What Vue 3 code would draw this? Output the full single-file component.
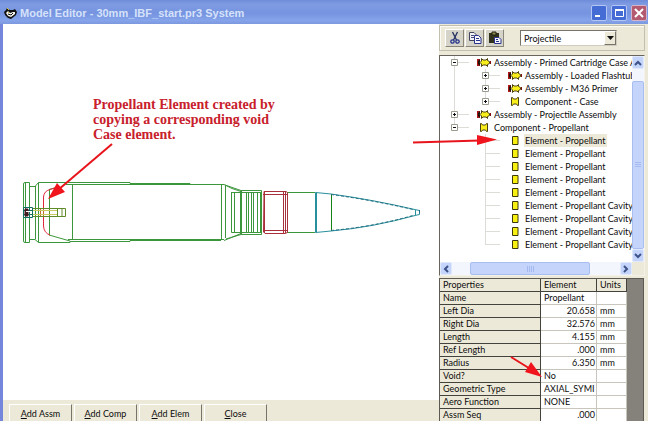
<script setup>
import { ref } from 'vue'

const kind = ref('Projectile')
const selected = ref(6)

const tree = [
  { level: 1, type: 'assembly', toggle: '-', label: 'Assembly - Primed Cartridge Case A' },
  { level: 2, type: 'assembly', toggle: '+', trunk: true, label: 'Assembly - Loaded Flashtub' },
  { level: 2, type: 'assembly', toggle: '+', trunk: true, label: 'Assembly - M36 Primer' },
  { level: 2, type: 'component', toggle: '+', trunk: true, last: true, label: 'Component - Case' },
  { level: 1, type: 'assembly', toggle: '+', label: 'Assembly - Projectile Assembly' },
  { level: 1, type: 'component', toggle: '-', last: true, label: 'Component - Propellant' },
  { level: 2, type: 'element', label: 'Element - Propellant' },
  { level: 2, type: 'element', label: 'Element - Propellant' },
  { level: 2, type: 'element', label: 'Element - Propellant' },
  { level: 2, type: 'element', label: 'Element - Propellant' },
  { level: 2, type: 'element', label: 'Element - Propellant' },
  { level: 2, type: 'element', label: 'Element - Propellant Cavity' },
  { level: 2, type: 'element', label: 'Element - Propellant Cavity' },
  { level: 2, type: 'element', label: 'Element - Propellant Cavity' },
  { level: 2, type: 'element', last: true, label: 'Element - Propellant Cavity' },
]

const properties = [
  { name: 'Name', value: 'Propellant', unit: '' },
  { name: 'Left Dia', value: '20.658', unit: 'mm', num: true },
  { name: 'Right Dia', value: '32.576', unit: 'mm', num: true },
  { name: 'Length', value: '4.155', unit: 'mm', num: true },
  { name: 'Ref Length', value: '.000', unit: 'mm', num: true },
  { name: 'Radius', value: '6.350', unit: 'mm', num: true },
  { name: 'Void?', value: 'No', unit: '' },
  { name: 'Geometric Type', value: 'AXIAL_SYMI', unit: '' },
  { name: 'Aero Function', value: 'NONE', unit: '' },
  { name: 'Assm Seq', value: '.000', unit: '', num: true },
]

const actions = [
  { key: 'A', rest: 'dd Assm' },
  { key: 'A', rest: 'dd Comp' },
  { key: 'A', rest: 'dd Elem' },
  { key: 'C', rest: 'lose' },
]
</script>

<template>
  <div class="window">
    <header class="titlebar">
      <svg class="app-icon" width="13" height="13" viewBox="0 0 13 13">
        <path d="M0 5 L2 3 L3 1 L6 3 L9 3 L11 2 L13 5 L12 8 L7 12 L4 11 L1 8 Z" fill="#111" />
        <path d="M2 6 L4 4 L6 6 L9 5 L11 5 L11 7 L7 10 L4 9 Z" fill="#f4f4ee" />
        <path d="M3 1 L5 3 M4 5 L5 6" stroke="#d8c84a" stroke-width="1" />
        <path d="M4 7 L7 8 L9 6" stroke="#111" stroke-width="1" fill="none" />
      </svg>
      <h1 class="title">Model Editor - 30mm_IBF_start.pr3 System</h1>
      <div class="caption-buttons">
        <button class="caption" aria-label="Minimize">
          <svg width="14" height="14" viewBox="0 0 14 14"><path d="M3 10 H8" stroke="#fff" stroke-width="2" /></svg>
        </button>
        <button class="caption" aria-label="Maximize">
          <svg width="14" height="14" viewBox="0 0 14 14"><path d="M3 4 H12" stroke="#fff" stroke-width="2" /><path d="M3.5 4 V10.5 H11.5 V4" stroke="#fff" fill="none" /></svg>
        </button>
        <button class="caption close" aria-label="Close window">
          <svg width="14" height="14" viewBox="0 0 14 14"><path d="M3 3 L11 11 M11 3 L3 11" stroke="#fff" stroke-width="2" /></svg>
        </button>
      </div>
    </header>

    <div class="body">
      <main class="work">
        <div class="canvas">
          <svg class="drawing" width="430" height="80" viewBox="0 172 430 80" fill="none" stroke="#3c963c" stroke-width="1">
            <path d="M23.5 184 Q23.5 182.500 25 182.500 H29.500 V242.500 H25 Q23.500 242.500 23.500 241 Z M25.500 183 V242" />
            <path d="M29.500 186.500 H35 L38.500 182.500 M29.500 239.500 H35 L38.500 242.500 M35.500 186 V239 M38.500 182.500 V242.500" />
            <path d="M38.500 182.500 H130 V183.500 H190 V184.500 H223 M66 184.500 H224 M38.500 242.500 H70 V241.500 H130 V240.500 H221 M68 239.500 H224" />
            <path d="M72.500 185 V240 M49.500 189 V235 M49 189.500 L58 187 M49 235 L70 241" />
            <path d="M221.500 185 V240 M225.500 186 V238 M224 184.500 L232 188.500 L241 191.500 M224 240.500 L241 233.500 M225 185 L241 190.500 H261.500 V234.500 H241 L226 239" />
            <path d="M231.500 192 V232.500 H261 M234.500 192 V232 M231.500 192.500 H261 M240.500 191 V234 M241.500 191 V234 M246.500 192 V233 M248.500 192 V233 M251.500 192 V233 M253.500 192 V233 M257.500 192 V233 M260.500 192 V233 M287 192.500 H315 M287 232.500 H315" />
            <path d="M331.500 194 V230" stroke="#148214" />
            <path d="M58 187 L50 189.500 Q44 191 43.500 197 V226 Q44 233 50 235" stroke="#e0283c" />
            <path d="M33 208.500 H65.500 V216.500 H33 M49.500 208 V216 M57.500 208 V216 M62 209 V216" stroke="#5f8a28" />
            <path d="M40.500 209 V216 M43.500 209 V216" stroke="#c46a30" />
            <path d="M33 210.500 H57 M33 214.500 H57" stroke="#c8cc60" />
            <path d="M23.500 207.500 H32.500 V217.500 H23.500 Z M29.500 208 V217 M23 210.500 H32 M23 214.500 H32" stroke="#137060" />
            <path d="M25 209 H28 V216 H25 Z" fill="#461820" stroke="#461820" />
            <path d="M26 211.500 H30" stroke="#fff" />
            <path d="M264 191.500 H286 L287.500 192.500 V232.500 L285 233.500 H265 L263.500 232 Z M264.500 192 V233 M283.500 192 V233 M285.500 192 V233 M263 194.500 H287 M263 230.500 H287" stroke="#a8303c" />
            <path d="M315.500 192.500 V232.500 M316.500 192.500 V232.500 M315.500 192.500 L331 194 Q372 199.500 417 210 L419.500 210.500 V214.500 L417 215 Q372 227.500 331 231 L315.500 232.500 M415.500 210 V215" stroke="#28909c" />
            <path d="M331 194.500 Q372 200 413 209.500 M331 230.500 Q372 227 413 215.500 M419.500 210 V215" stroke="#206c80" stroke-dasharray="3 2" />
          </svg>
          <p class="note">Propellant Element created by<br />copying a corresponding void<br />Case element.</p>
        </div>
        <footer class="actions">
          <button v-for="(a, i) in actions" :key="i" class="action"><u>{{ a.key }}</u>{{ a.rest }}</button>
        </footer>
      </main>

      <aside class="side">
        <div class="toolbar">
          <div class="tools">
            <button class="tool" aria-label="Cut">
              <svg width="14" height="14" viewBox="0 0 14 14" fill="none"><path d="M4.500 1 L8.500 9 M9.500 1 L5.500 9" stroke="#222e60" stroke-width="1.300" /><circle cx="4.500" cy="10.500" r="1.700" stroke="#26348c" stroke-width="1.300" /><circle cx="9.500" cy="10.500" r="1.700" stroke="#26348c" stroke-width="1.300" /></svg>
            </button>
            <button class="tool" aria-label="Copy">
              <svg width="14" height="14" viewBox="0 0 14 14"><path d="M1.500 1.500 H6 L8.500 4 V9.500 H1.500 Z" fill="#f2f2f6" stroke="#40445c" /><path d="M3 4.500 H6 M3 6.500 H6" stroke="#444a80" /><path d="M6.500 4.500 H10.500 L13 7 V12.500 H6.500 Z" fill="#f4f4fa" stroke="#29348c" /><path d="M8 7.500 H11 M8 9.500 H12" stroke="#29348c" /></svg>
            </button>
            <button class="tool" aria-label="Paste">
              <svg width="14" height="14" viewBox="0 0 14 14"><path d="M1 2 H11 V12 H1 Z" fill="#30321c" /><path d="M4 1 H8 V4 H4 Z" fill="#8c8a50" stroke="#20200e" /><path d="M6.500 6.500 H11 L13 8.500 V12.500 H6.500 Z" fill="#f4f4fa" stroke="#29348c" /><path d="M8 8.500 H10 M8 10.500 H11" stroke="#29348c" /></svg>
            </button>
          </div>
          <div class="combo">
            <select v-model="kind" aria-label="Model kind">
              <option>Projectile</option>
            </select>
            <span class="combo-arrow"><svg width="7" height="4" viewBox="0 0 7 4"><path d="M0 0 H7 L3.500 4 Z" fill="#111" /></svg></span>
          </div>
        </div>

        <section class="tree" aria-label="Model tree">
          <ul class="rows">
            <li v-for="(n, i) in tree" :key="i" class="row">
              <span v-if="n.level === 2" class="guide" :class="{ trunk: n.trunk }"></span>
              <span class="guide trunk branch" :class="{ last: n.last }">
                <button v-if="n.toggle" class="toggle" :aria-label="n.toggle === '+' ? 'Expand' : 'Collapse'">
                  <svg width="7" height="7" viewBox="0 0 7 7"><path d="M.5 .5 H6.500 V6.500 H.5 Z" fill="#fff" stroke="#9a9a8e" /><path d="M2 3.500 H5" stroke="#111" /><path v-if="n.toggle === '+'" d="M3.500 2 V5" stroke="#111" /></svg>
                </button>
              </span>
              <span class="icon">
                <svg v-if="n.type === 'assembly'" width="14" height="9" viewBox="0 0 14 9">
                  <path d="M0 1 H3 V8 H0 Z" fill="#b01818" /><path d="M1 3 L3 1 V8 L1 6 Z" fill="#201008" />
                  <path d="M4.500 .5 L6 2 H9 L10.500 .5 V2.500 L12.500 3.500 V5.500 L10.500 6.500 V8.500 L9 7 H6 L4.500 8.500 V6 L3 4.500 L4.500 3 Z" fill="#f8ee1c" stroke="#4c4010" />
                  <path d="M5 3 H11 V6 H5 Z" fill="#f8ee1c" />
                  <path d="M13.500 3 V6" stroke="#801010" />
                </svg>
                <svg v-else-if="n.type === 'component'" width="8" height="9" viewBox="0 0 8 9">
                  <path d="M.5 .5 H1.500 L2.500 2 H5.500 L6.500 .5 H7.500 V8.500 H6.500 L5.500 7 H2.500 L1.500 8.500 H.5 Z" fill="#f8ee1c" stroke="#4c4010" />
                </svg>
                <svg v-else width="7" height="9" viewBox="0 0 7 9"><path d="M.5 .5 H6 V8.500 H.5 Z" fill="#f8f010" stroke="#3c380c" /></svg>
              </span>
              <a href="#" class="label" :class="{ selected: selected === i }" @click.prevent="selected = i">{{ n.label }}</a>
            </li>
          </ul>
          <div class="vscroll">
            <button class="sb" aria-label="Scroll up"><svg width="8" height="6" viewBox="0 0 8 6"><path d="M1 5 L4 2 L7 5" fill="none" stroke="#3c5288" stroke-width="2" /></svg></button>
            <span class="vthumb"><svg width="6" height="7" viewBox="0 0 6 7"><path d="M0 .5 H6 M0 2.500 H6 M0 4.500 H6" stroke="#a4baf0" /></svg></span>
            <button class="sb" aria-label="Scroll down"><svg width="8" height="6" viewBox="0 0 8 6"><path d="M1 1 L4 4 L7 1" fill="none" stroke="#3c5288" stroke-width="2" /></svg></button>
          </div>
          <div class="hscroll">
            <button class="sb" aria-label="Scroll left"><svg width="6" height="8" viewBox="0 0 6 8"><path d="M5 1 L2 4 L5 7" fill="none" stroke="#3c5288" stroke-width="2" /></svg></button>
            <span class="hthumb"><svg width="7" height="6" viewBox="0 0 7 6"><path d="M.5 0 V6 M2.500 0 V6 M4.500 0 V6 M6.500 0 V6" stroke="#a4baf0" /></svg></span>
            <button class="sb" aria-label="Scroll right"><svg width="6" height="8" viewBox="0 0 6 8"><path d="M1 1 L4 4 L1 7" fill="none" stroke="#3c5288" stroke-width="2" /></svg></button>
          </div>
        </section>

        <div class="sheet">
          <table>
            <colgroup><col class="c-name" /><col class="c-value" /><col class="c-unit" /></colgroup>
            <thead>
              <tr><th scope="col">Properties</th><th scope="col">Element</th><th scope="col">Units</th></tr>
            </thead>
            <tbody>
              <tr v-for="p in properties" :key="p.name">
                <th scope="row">{{ p.name }}</th>
                <td :class="{ num: p.num }">{{ p.value }}</td>
                <td>{{ p.unit }}</td>
              </tr>
            </tbody>
          </table>
        </div>
      </aside>
    </div>

    <svg class="arrows" width="648" height="421" viewBox="0 0 648 421" aria-hidden="true">
      <g stroke="#e8141c" stroke-width="2">
        <path d="M112 144 L58 190" />
        <path d="M413 142.500 L480 140.500" />
        <path d="M511 357 L532 370" />
      </g>
      <g fill="#f0141c">
        <path d="M48 199 L57 183 L65 192 Z" />
        <path d="M497 139.500 L477 135 L477 145 Z" />
        <path d="M542 377 L525 372 L531 362 Z" />
      </g>
    </svg>
  </div>
</template>

<style>
body {
  margin: 0;
  background: #ece9d8;
}
</style>

<style scoped>
.window {
  position: relative;
  display: flex;
  flex-direction: column;
  height: 100vh;
  overflow: hidden;
  background: #ece9d8;
  color: #0c0c0c;
  font: 9px/13px Lato, "Liberation Sans", sans-serif;
}
button {
  margin: 0;
  padding: 0;
  font: inherit;
  color: inherit;
}
svg {
  display: block;
  flex: none;
}
.titlebar {
  display: flex;
  align-items: center;
  gap: 3px;
  height: 24px;
  flex: none;
  box-sizing: border-box;
  padding: 2px 1px 0 4px;
  background: linear-gradient(#6f8cda, #7f9ce2 20%, #7593e0 55%, #86a4ea 85%, #7c98de);
}
.title {
  flex: 1;
  margin: 0;
  font: bold 11px/16px "Liberation Sans", Arial, sans-serif;
  color: #d6e2fa;
  white-space: nowrap;
}
.caption-buttons {
  display: flex;
  gap: 4px;
}
.caption {
  display: grid;
  place-items: center;
  width: 16px;
  height: 16px;
  border: 1px solid #b4c6f4;
  border-radius: 2px;
  background: #456cd4;
}
.caption.close {
  background: #b35a70;
  border-color: #d4b4cc;
}
.body {
  flex: 1;
  min-height: 0;
  display: grid;
  grid-template-columns: minmax(0, 1fr) 209px;
  border-left: 3px solid #7486dc;
}
.work {
  display: flex;
  flex-direction: column;
  min-height: 0;
}
.canvas {
  position: relative;
  flex: 1;
  background: #fff;
}
.drawing {
  position: absolute;
  left: -3px;
  top: 148px;
}
.note {
  position: absolute;
  left: 90px;
  top: 73px;
  margin: 0;
  font: bold 14px/15px "Liberation Serif", serif;
  color: #c8202c;
  white-space: nowrap;
}
.actions {
  display: flex;
  gap: 2px;
  height: 21px;
  box-sizing: border-box;
  padding: 4px 6px 0;
}
.action {
  width: 63px;
  height: 18px;
  border: 1px solid;
  border-color: #fff #77746a #c8c5b4 #fff;
  background: #ece9d8;
}
.side {
  display: flex;
  flex-direction: column;
  min-height: 0;
  overflow: hidden;
  padding: 1px 3px 0 0;
}
.toolbar {
  display: flex;
  align-items: center;
  gap: 16px;
  height: 26px;
  flex: none;
  box-sizing: border-box;
  padding: 0 5px;
  border: 1px solid #c2bfae;
  box-shadow: inset 1px 1px #fbfaf4;
}
.tools {
  display: flex;
  gap: 1px;
}
.tool {
  display: grid;
  place-items: center;
  width: 19px;
  height: 18px;
  border: 1px solid;
  border-color: #fff #8a877a #8a877a #fff;
  background: #d6d3c8;
}
.combo {
  position: relative;
  width: 97px;
}
.combo select {
  display: block;
  width: 100%;
  height: 16px;
  padding: 0 14px 0 3px;
  border: 1px solid;
  border-color: #77746a #d0cdc0 #d0cdc0 #77746a;
  border-radius: 0;
  appearance: none;
  background: #fff;
  color: inherit;
  font: inherit;
}
.combo-arrow {
  position: absolute;
  top: 1px;
  right: 1px;
  bottom: 1px;
  width: 12px;
  box-sizing: border-box;
  display: grid;
  place-items: center;
  border: 1px solid;
  border-color: #fff #77746a #77746a #fff;
  background: #ece9d8;
  pointer-events: none;
}
.tree {
  display: grid;
  grid-template-columns: minmax(0, 1fr) 12px;
  grid-template-rows: 206px 13px;
  flex: none;
  margin-top: 4px;
  border: 1px solid;
  border-color: #66645c #f4f2e8 #f4f2e8 #66645c;
}
.rows {
  margin: 0;
  padding: 0 0 0 4px;
  list-style: none;
  background: #fff;
  overflow: hidden;
}
.row {
  display: flex;
  height: 13px;
  white-space: nowrap;
}
.guide {
  position: relative;
  flex: none;
  width: 31px;
}
.trunk::before {
  content: "";
  position: absolute;
  left: 10px;
  top: 0;
  bottom: 0;
  border-left: 1px solid #dddcd6;
}
.last::before {
  bottom: 6px;
}
.branch::after {
  content: "";
  position: absolute;
  left: 10px;
  right: 6px;
  top: 6px;
  border-top: 1px solid #dddcd6;
}
.toggle {
  position: absolute;
  z-index: 1;
  left: 7px;
  top: 3px;
  border: 0;
  background: none;
}
.icon {
  display: grid;
  place-items: center;
  flex: none;
  width: 18px;
}
.label {
  padding: 0 1px;
  color: inherit;
  text-decoration: none;
}
.label.selected {
  background: #ece9d8;
}
.vscroll {
  display: flex;
  flex-direction: column;
  background: #f4f6fd;
}
.hscroll {
  display: flex;
  background: #f4f6fd;
}
.sb {
  display: grid;
  place-items: center;
  flex: none;
  width: 12px;
  height: 13px;
  border: 1px solid #e0e9fc;
  border-radius: 2px;
  background: #c4d4fa;
}
.vthumb,
.hthumb {
  display: grid;
  place-items: center;
  box-sizing: border-box;
  border: 1px solid #a8bdf0;
  border-radius: 2px;
  background: #c4d4fb;
}
.vthumb {
  flex: 1;
  margin-top: 12px;
}
.hthumb {
  flex: 1;
  margin: 0 30px 0 18px;
}
.sheet {
  flex: none;
  margin: 2px 1px 0 0;
  border: 1px solid #5c5a52;
  background: #84827a;
}
table {
  table-layout: fixed;
  width: 187px;
  border-collapse: separate;
  border-spacing: 0;
}
.c-name { width: 101px; }
.c-value { width: 56px; }
.c-unit { width: 30px; }
th,
td {
  box-sizing: border-box;
  height: 13px;
  padding: 0 1px 0 3px;
  font-weight: normal;
  line-height: 12px;
  text-align: left;
  white-space: nowrap;
  overflow: hidden;
  border: 0 solid;
  border-width: 0 1px 1px 0;
}
th {
  background: #ece9d8;
  border-color: #44423c;
}
td {
  background: #fff;
  border-color: #c8c6bc;
}
.num {
  text-align: right;
}
.arrows {
  position: absolute;
  left: 0;
  top: 0;
  pointer-events: none;
}
</style>
